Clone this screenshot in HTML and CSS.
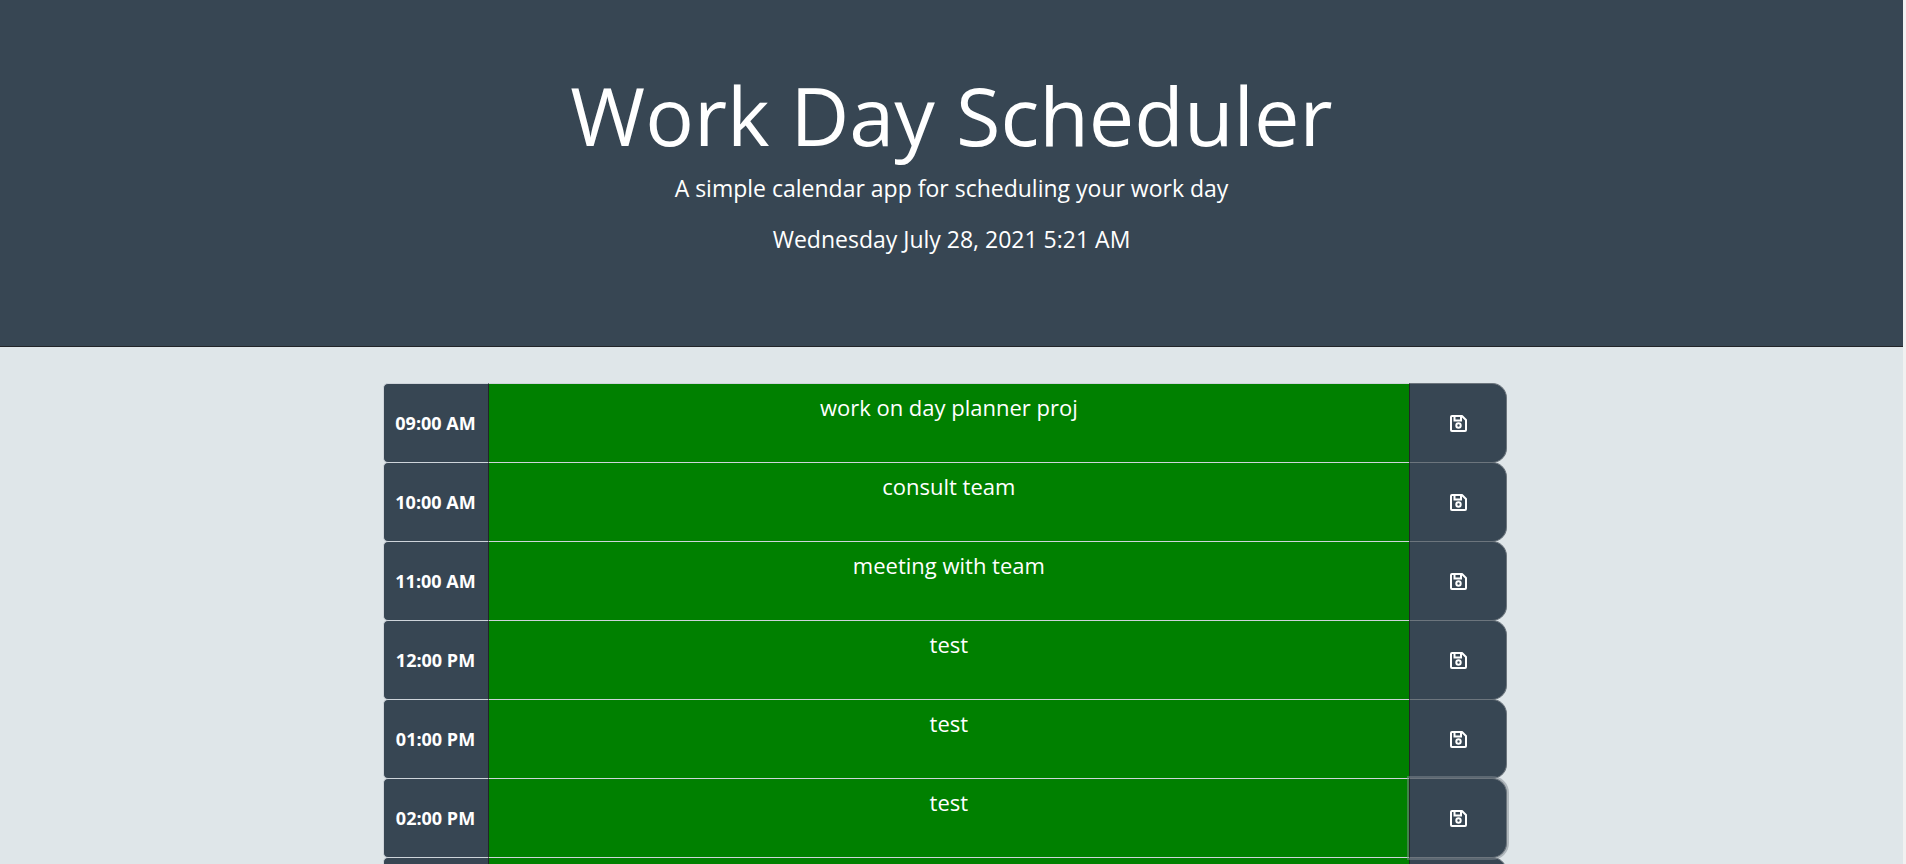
FILE: index.html
```html
<!DOCTYPE html>
<html lang="en">
<head>
<meta charset="utf-8">
<meta name="viewport" content="width=device-width, initial-scale=1">
<title>Work Day Scheduler</title>
<link rel="stylesheet" href="styles.css">
</head>
<body>
<svg class="sprite" aria-hidden="true">
  <symbol id="save" viewBox="0 0 17 17">
    <path fill="none" stroke="currentColor" stroke-width="2" stroke-linejoin="round" d="M2 1H12L16 5V15Q16 16 15 16H2Q1 16 1 15V2Q1 1 2 1Z"/>
    <path fill="none" stroke="currentColor" stroke-width="2" d="M4.500 1V5.500H11V1"/>
    <circle fill="none" stroke="currentColor" stroke-width="2" cx="8.500" cy="10.500" r="2.200"/>
  </symbol>
</svg>
<header class="hero">
  <h1 class="title">Work Day Scheduler</h1>
  <p class="lead">A simple calendar app for scheduling your work day</p>
  <p class="lead">Wednesday July 28, 2021 5:21 AM</p>
</header>
<main class="planner">
  <div class="row"><label class="hour" for="h9">09:00 AM</label><textarea class="task" id="h9">work on day planner proj</textarea><button class="save" aria-label="Save 09:00 AM"><svg class="icon"><use href="#save"/></svg></button></div>
  <div class="row"><label class="hour" for="h10">10:00 AM</label><textarea class="task" id="h10">consult team</textarea><button class="save" aria-label="Save 10:00 AM"><svg class="icon"><use href="#save"/></svg></button></div>
  <div class="row"><label class="hour" for="h11">11:00 AM</label><textarea class="task" id="h11">meeting with team</textarea><button class="save" aria-label="Save 11:00 AM"><svg class="icon"><use href="#save"/></svg></button></div>
  <div class="row"><label class="hour" for="h12">12:00 PM</label><textarea class="task" id="h12">test</textarea><button class="save" aria-label="Save 12:00 PM"><svg class="icon"><use href="#save"/></svg></button></div>
  <div class="row"><label class="hour" for="h13">01:00 PM</label><textarea class="task" id="h13">test</textarea><button class="save" aria-label="Save 01:00 PM"><svg class="icon"><use href="#save"/></svg></button></div>
  <div class="row"><label class="hour" for="h14">02:00 PM</label><textarea class="task" id="h14">test</textarea><button class="save save-active" aria-label="Save 02:00 PM"><svg class="icon"><use href="#save"/></svg></button></div>
  <div class="row"><label class="hour" for="h15"></label><textarea class="task" id="h15"></textarea><button class="save" aria-label="Save"><svg class="icon"><use href="#save"/></svg></button></div>
</main>
</body>
</html>
```
FILE: styles.css
```css
* { box-sizing: border-box; }

html {
  height: 100%;
  overflow: hidden;
  background: #f1f1f1;
}

body {
  height: 100%;
  margin: 0 3px 0 0;
  overflow: hidden;
  background: #dfe6e9;
  color: #fff;
  font-family: "Open Sans", "Noto Sans", sans-serif;
}

.sprite { display: none; }

.hero {
  padding: 71px 24px 89px;
  border-bottom: 1px solid #222529;
  background: #374653;
  text-align: center;
}

.title {
  margin: 0 0 12px;
  font-size: 81px;
  font-weight: 400;
  line-height: 88px;
}

.lead {
  margin: 0 0 16px;
  font-size: 23px;
  line-height: 35px;
}

.lead + .lead { margin-bottom: 0; }

.planner {
  margin: 36px 20.8% 0 20.1%;
}

.row {
  display: flex;
  height: 80px;
  margin-bottom: -1px;
}

.hour {
  display: flex;
  align-items: center;
  justify-content: center;
  flex: 0 0 106px;
  border: 1px solid #ced4da;
  border-right-color: #222529;
  border-radius: 5px 0 0 5px;
  background: #374653;
  font-size: 18px;
  font-weight: 700;
}

.task {
  flex: 1;
  min-width: 0;
  padding: 7px 12px;
  border: solid #ced4da;
  border-width: 1px 0;
  border-radius: 0;
  outline: 0;
  background: green;
  color: #fff;
  font: 22px/32px "Open Sans", "Noto Sans", sans-serif;
  text-align: center;
  resize: none;
}

.save {
  display: flex;
  align-items: center;
  justify-content: center;
  flex: 0 0 98px;
  padding: 0;
  border: 1px solid #6c757d;
  border-left-color: #222529;
  border-radius: 0 15px 15px 0;
  background: #374653;
  color: #fff;
}

.save-active {
  z-index: 1;
  box-shadow: 0 0 0 2px rgba(130, 138, 145, 0.5);
}

.icon { width: 17px; height: 17px; }
```
